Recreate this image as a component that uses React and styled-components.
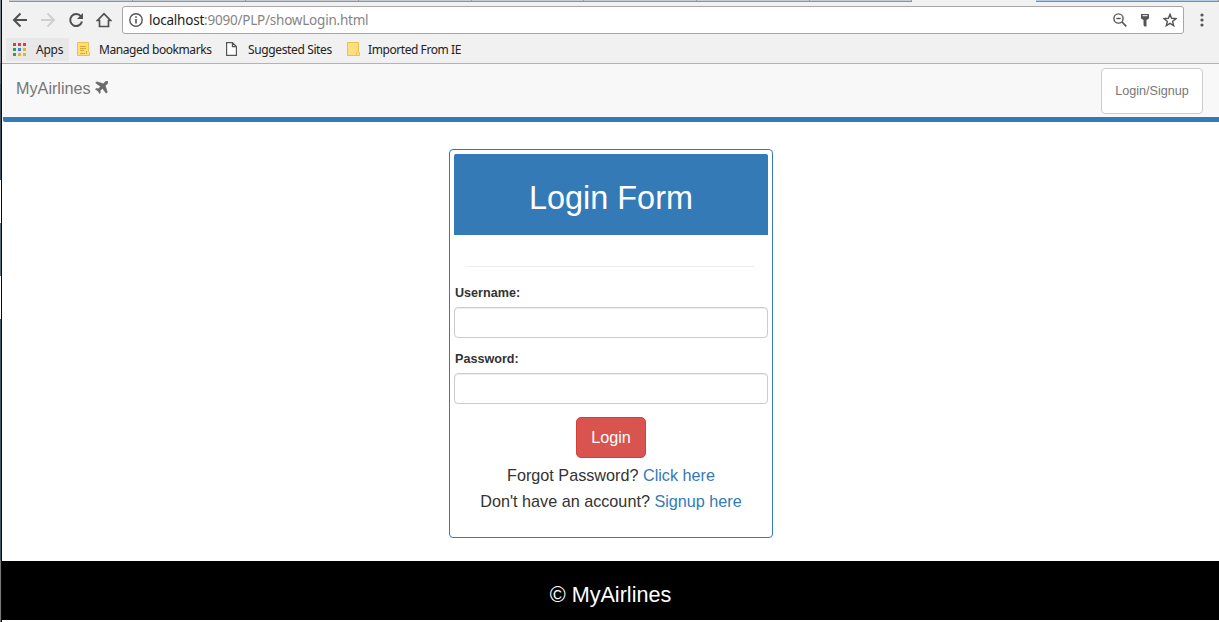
import React from 'react';
import styled, { createGlobalStyle } from 'styled-components';

const Global = createGlobalStyle`
  * { box-sizing: border-box; }
  body { margin: 0; background: #fff; color: #333; font-family: "Liberation Sans", Arial, sans-serif; overflow: hidden; }
`;

const Screen = styled.div`
  display: flex;
  width: 1219px;
  height: 622px;
`;
const Edge = styled.div`
  width: 2px;
  flex: none;
  border-right: 1px solid #05080c;
  background: linear-gradient(#7d858d 0 63px, #5d6872 63px 84px, #3f5262 84px 180px, #fff 180px 223px, #5d6d7a 223px 276px, #fff 276px 319px, #42576a 319px 560px, #777 560px);
`;
const Main = styled.div`
  flex: 1;
  min-width: 0;
  display: flex;
  flex-direction: column;
`;
const Chrome = styled.header`
  height: 64px;
  background: #f1f1f1;
  border-bottom: 1px solid #b3b3b3;
  font-family: "Noto Sans", "Open Sans", sans-serif;
  color: #222;
`;
const TabStrip = styled.div`
  display: flex;
  height: 2px;
  padding-left: 7px;
`;
const Tab = styled.div`
  width: ${p => p.$w}px;
  margin-left: ${p => p.$gap || 0}px;
  background: ${p => (p.$blue ? '#b4cde6' : '#c8cdd3')};
  border-bottom: 1px solid ${p => (p.$blue ? '#6d8fb2' : '#8f949b')};
  border-right: 1px solid #979ba3;
`;
const Toolbar = styled.div`
  display: flex;
  align-items: center;
  height: 36px;
  padding: 0 10px;
`;
const NavIcon = styled.svg`
  width: 16px;
  height: 16px;
  flex: none;
  margin-right: 12px;
  fill: none;
  stroke: ${p => (p.$off ? '#d0d0d0' : '#505050')};
  stroke-width: 2;
`;
const Address = styled.div`
  display: flex;
  align-items: center;
  flex: 1;
  height: 28px;
  margin-left: -2px;
  padding: 0 6px;
  background: #fff;
  border: 1px solid #a9a6a6;
  border-radius: 3px;
`;
const Url = styled.div`
  flex: 1;
  margin-left: 6px;
  font-size: 13.5px;
  line-height: 20px;
  letter-spacing: ${p => p.$track}px;
  color: #858585;
  white-space: nowrap;
  b { font-weight: 400; color: #222; }
`;
const BarIcon = styled.svg`
  width: 14px;
  height: 14px;
  flex: none;
  margin-left: ${p => p.$ml || 0}px;
  fill: none;
  stroke: #555;
  stroke-width: 1.4;
`;
const Bookmarks = styled.div`
  display: flex;
  align-items: center;
  height: 22px;
  padding-left: 4px;
`;
const Bookmark = styled.div`
  display: flex;
  align-items: center;
  width: ${p => p.$w}px;
  height: 23px;
  padding-left: ${p => p.$pl}px;
  background: ${p => (p.$active ? '#e8e8e8' : 'transparent')};
  font-size: 12px;
  letter-spacing: ${p => p.$track}px;
  white-space: nowrap;
  svg { flex: none; margin-right: ${p => p.$gap}px; }
`;
const Navbar = styled.nav`
  display: flex;
  justify-content: space-between;
  align-items: flex-start;
  height: 58px;
  margin-left: 1px;
  padding: 4px 16px 0 13px;
  background: #f8f8f8;
  border-bottom: 5px solid #337ab7;
  border-bottom-left-radius: 2px;
`;
const Brand = styled.div`
  display: flex;
  align-items: center;
  gap: 4px;
  height: 40px;
  font-size: 16.2px;
  color: #777;
  svg { margin-top: -2px; }
`;
const SignupButton = styled.button`
  width: 102px;
  height: 46px;
  padding: 0;
  background: #fff;
  border: 1px solid #ccc;
  border-radius: 4px;
  font: 12.6px "Liberation Sans", Arial, sans-serif;
  color: #777;
`;
const Page = styled.main`
  flex: 1;
  padding-top: 27px;
`;
const Panel = styled.form`
  width: 324px;
  height: 389px;
  margin-left: 447px;
  padding: 4px;
  border: 1px solid #337ab7;
  border-radius: 4px;
`;
const Heading = styled.h1`
  height: 81px;
  margin: 0;
  padding-top: 25px;
  background: #337ab7;
  border-radius: 2px 2px 0 0;
  color: #fff;
  font-size: 32.4px;
  font-weight: 400;
  line-height: 38px;
  text-align: center;
`;
const Rule = styled.hr`
  height: 1px;
  margin: 31px 13px 18px;
  border: 0;
  background: #eee;
`;
const Label = styled.label`
  display: block;
  height: 22px;
  padding-left: 1px;
  font-size: 12.6px;
  font-weight: 700;
  line-height: 16px;
`;
const Input = styled.input`
  display: block;
  width: 100%;
  height: 31px;
  margin-bottom: 13px;
  padding: 5px 11px;
  border: 1px solid #ccc;
  border-radius: 4px;
  box-shadow: inset 0 1px 1px rgba(0, 0, 0, 0.075);
`;
const LoginButton = styled.button`
  display: block;
  width: 70px;
  height: 41px;
  margin: 0 auto 4px;
  padding: 0;
  background: #d9534f;
  border: 1px solid #d43f3a;
  border-radius: 5px;
  color: #fff;
  font: 16.2px "Liberation Sans", Arial, sans-serif;
`;
const Hint = styled.p`
  margin: 0;
  text-align: center;
  font-size: 16.2px;
  line-height: 26px;
  a { color: #337ab7; text-decoration: none; }
`;
const Footer = styled.footer`
  height: 59px;
  margin-bottom: 2px;
  padding-top: 9px;
  background: #000;
  color: #fff;
  font-size: 21.6px;
  line-height: 50px;
  text-align: center;
`;

const dots = ['#d8413a', '#d8413a', '#d8413a', '#3a9b55', '#4280e0', '#e6b422', '#3a9b55', '#e6b422', '#e6b422'];

const Folder = ({ lines }) => (
  <svg width="13" height="14" viewBox="0 0 13 14">
    <path d="M.5.5h11v9l1 1v3H.5z" fill="#fddf7d" stroke="#eac14f" />
    {lines && <path d="M3 4.5h6M3 6.5h6M3 8.5h4M3 11.5h5M9.5 9v3" stroke="#dba92c" fill="none" />}
    {!lines && <path d="M9.5 13v-2.500l2-1.500" stroke="#eac14f" fill="none" />}
  </svg>
);

export default function App() {
  return (
    <Screen>
      <Global />
      <Edge />
      <Main>
        <Chrome>
          <TabStrip>
            <Tab $w={124} /><Tab $w={113} /><Tab $w={113} /><Tab $w={113} /><Tab $w={113} /><Tab $w={113} /><Tab $w={113} /><Tab $w={102} />
            <Tab $w={183} $gap={124} $blue />
          </TabStrip>
          <Toolbar>
            <NavIcon viewBox="0 0 16 16"><path d="M15 8H2.500M8.500 1.500L2 8l6.500 6.500" /></NavIcon>
            <NavIcon viewBox="0 0 16 16" $off><path d="M1 8h12.500M7.500 1.500L14 8l-6.500 6.500" /></NavIcon>
            <NavIcon viewBox="0 0 16 16"><path d="M13 4.400A6 6 0 1 0 14 9.600" /><path d="M15 1v6H9z" fill="#505050" stroke="none" /></NavIcon>
            <NavIcon viewBox="0 0 16 16"><path d="M3.500 8.500H1.500L8 1.700l6.500 6.800h-2v6h-9z" strokeWidth="1.700" /></NavIcon>
            <Address>
              <BarIcon viewBox="0 0 14 14"><circle cx="7" cy="7" r="6.200" /><path d="M7 6v4.500M7 3.300v1.500" strokeWidth="1.600" /></BarIcon>
              <Url $track={-0.22}><b>localhost</b>:9090/PLP/showLogin.html</Url>
              <BarIcon viewBox="0 0 14 14"><circle cx="5.500" cy="5.500" r="4.600" /><path d="M9 9l4.300 4.300" strokeWidth="1.700" /><path d="M3.300 5.500h4.400" /></BarIcon>
              <BarIcon viewBox="0 0 14 14" $ml={11}><path d="M3 1h8v4.500L8.500 7v6.500h-2L5.500 12V7L3 5.500z" fill="#555" stroke="none" /><path d="M4.500 2.700h5" stroke="#fff" strokeWidth="1" /></BarIcon>
              <BarIcon viewBox="0 0 14 14" $ml={11}><path d="M7 1.300l1.600 4 4.400.3-3.400 2.800 1.100 4.300L7 10.400l-3.700 2.300 1.100-4.300L1 5.600l4.400-.3z" /></BarIcon>
            </Address>
            <BarIcon viewBox="0 0 14 14" $ml={11}><g fill="#555" stroke="none"><circle cx="7" cy="2" r="1.600" /><circle cx="7" cy="7" r="1.600" /><circle cx="7" cy="12" r="1.600" /></g></BarIcon>
          </Toolbar>
          <Bookmarks>
            <Bookmark $w={63} $pl={7} $gap={10} $active $track={-0.25}>
              <svg width="13" height="13">{dots.map((c, i) => <rect key={i} x={(i % 3) * 5} y={Math.floor(i / 3) * 5} width="3" height="3" fill={c} />)}</svg>
              Apps
            </Bookmark>
            <Bookmark $w={150} $pl={8} $gap={9} $track={-0.43}><Folder lines />Managed bookmarks</Bookmark>
            <Bookmark $w={120} $pl={7} $gap={11} $track={-0.37}>
              <svg width="11" height="14" viewBox="0 0 11 14"><path d="M.6.6h5.800l4 4v8.800H.6zM6.400.6v4h4" fill="#fff" stroke="#555" strokeWidth="1.200" /></svg>
              Suggested Sites
            </Bookmark>
            <Bookmark $w={140} $pl={8} $gap={8} $track={-0.43}><Folder />Imported From IE</Bookmark>
          </Bookmarks>
        </Chrome>
        <Navbar>
          <Brand>
            MyAirlines
            <svg width="13" height="13" viewBox="0 0 13 13"><path d="M12.700.3c-.9-.6-1.900-.1-2.600.6L8.300 2.700 1.800.7.6 1.900l4.900 3.600-2 2.200-2.300-.3-.9.9 2.700 1.600 1.500 2.700.9-.9-.2-2.300 2.300-2 3.600 4.900 1.200-1.200-2-6.400 1.800-1.800c.7-.7 1.200-1.700.6-2.600z" fill="#6b6b6b" stroke="#6b6b6b" strokeWidth=".5" /></svg>
          </Brand>
          <SignupButton type="button">Login/Signup</SignupButton>
        </Navbar>
        <Page>
          <Panel>
            <Heading>Login Form</Heading>
            <Rule />
            <Label htmlFor="user">Username:</Label>
            <Input id="user" />
            <Label htmlFor="pass">Password:</Label>
            <Input id="pass" type="password" />
            <LoginButton type="button">Login</LoginButton>
            <Hint>Forgot Password? <a href="#forgot">Click here</a></Hint>
            <Hint>Don't have an account? <a href="#signup">Signup here</a></Hint>
          </Panel>
        </Page>
        <Footer>© MyAirlines</Footer>
      </Main>
    </Screen>
  );
}
